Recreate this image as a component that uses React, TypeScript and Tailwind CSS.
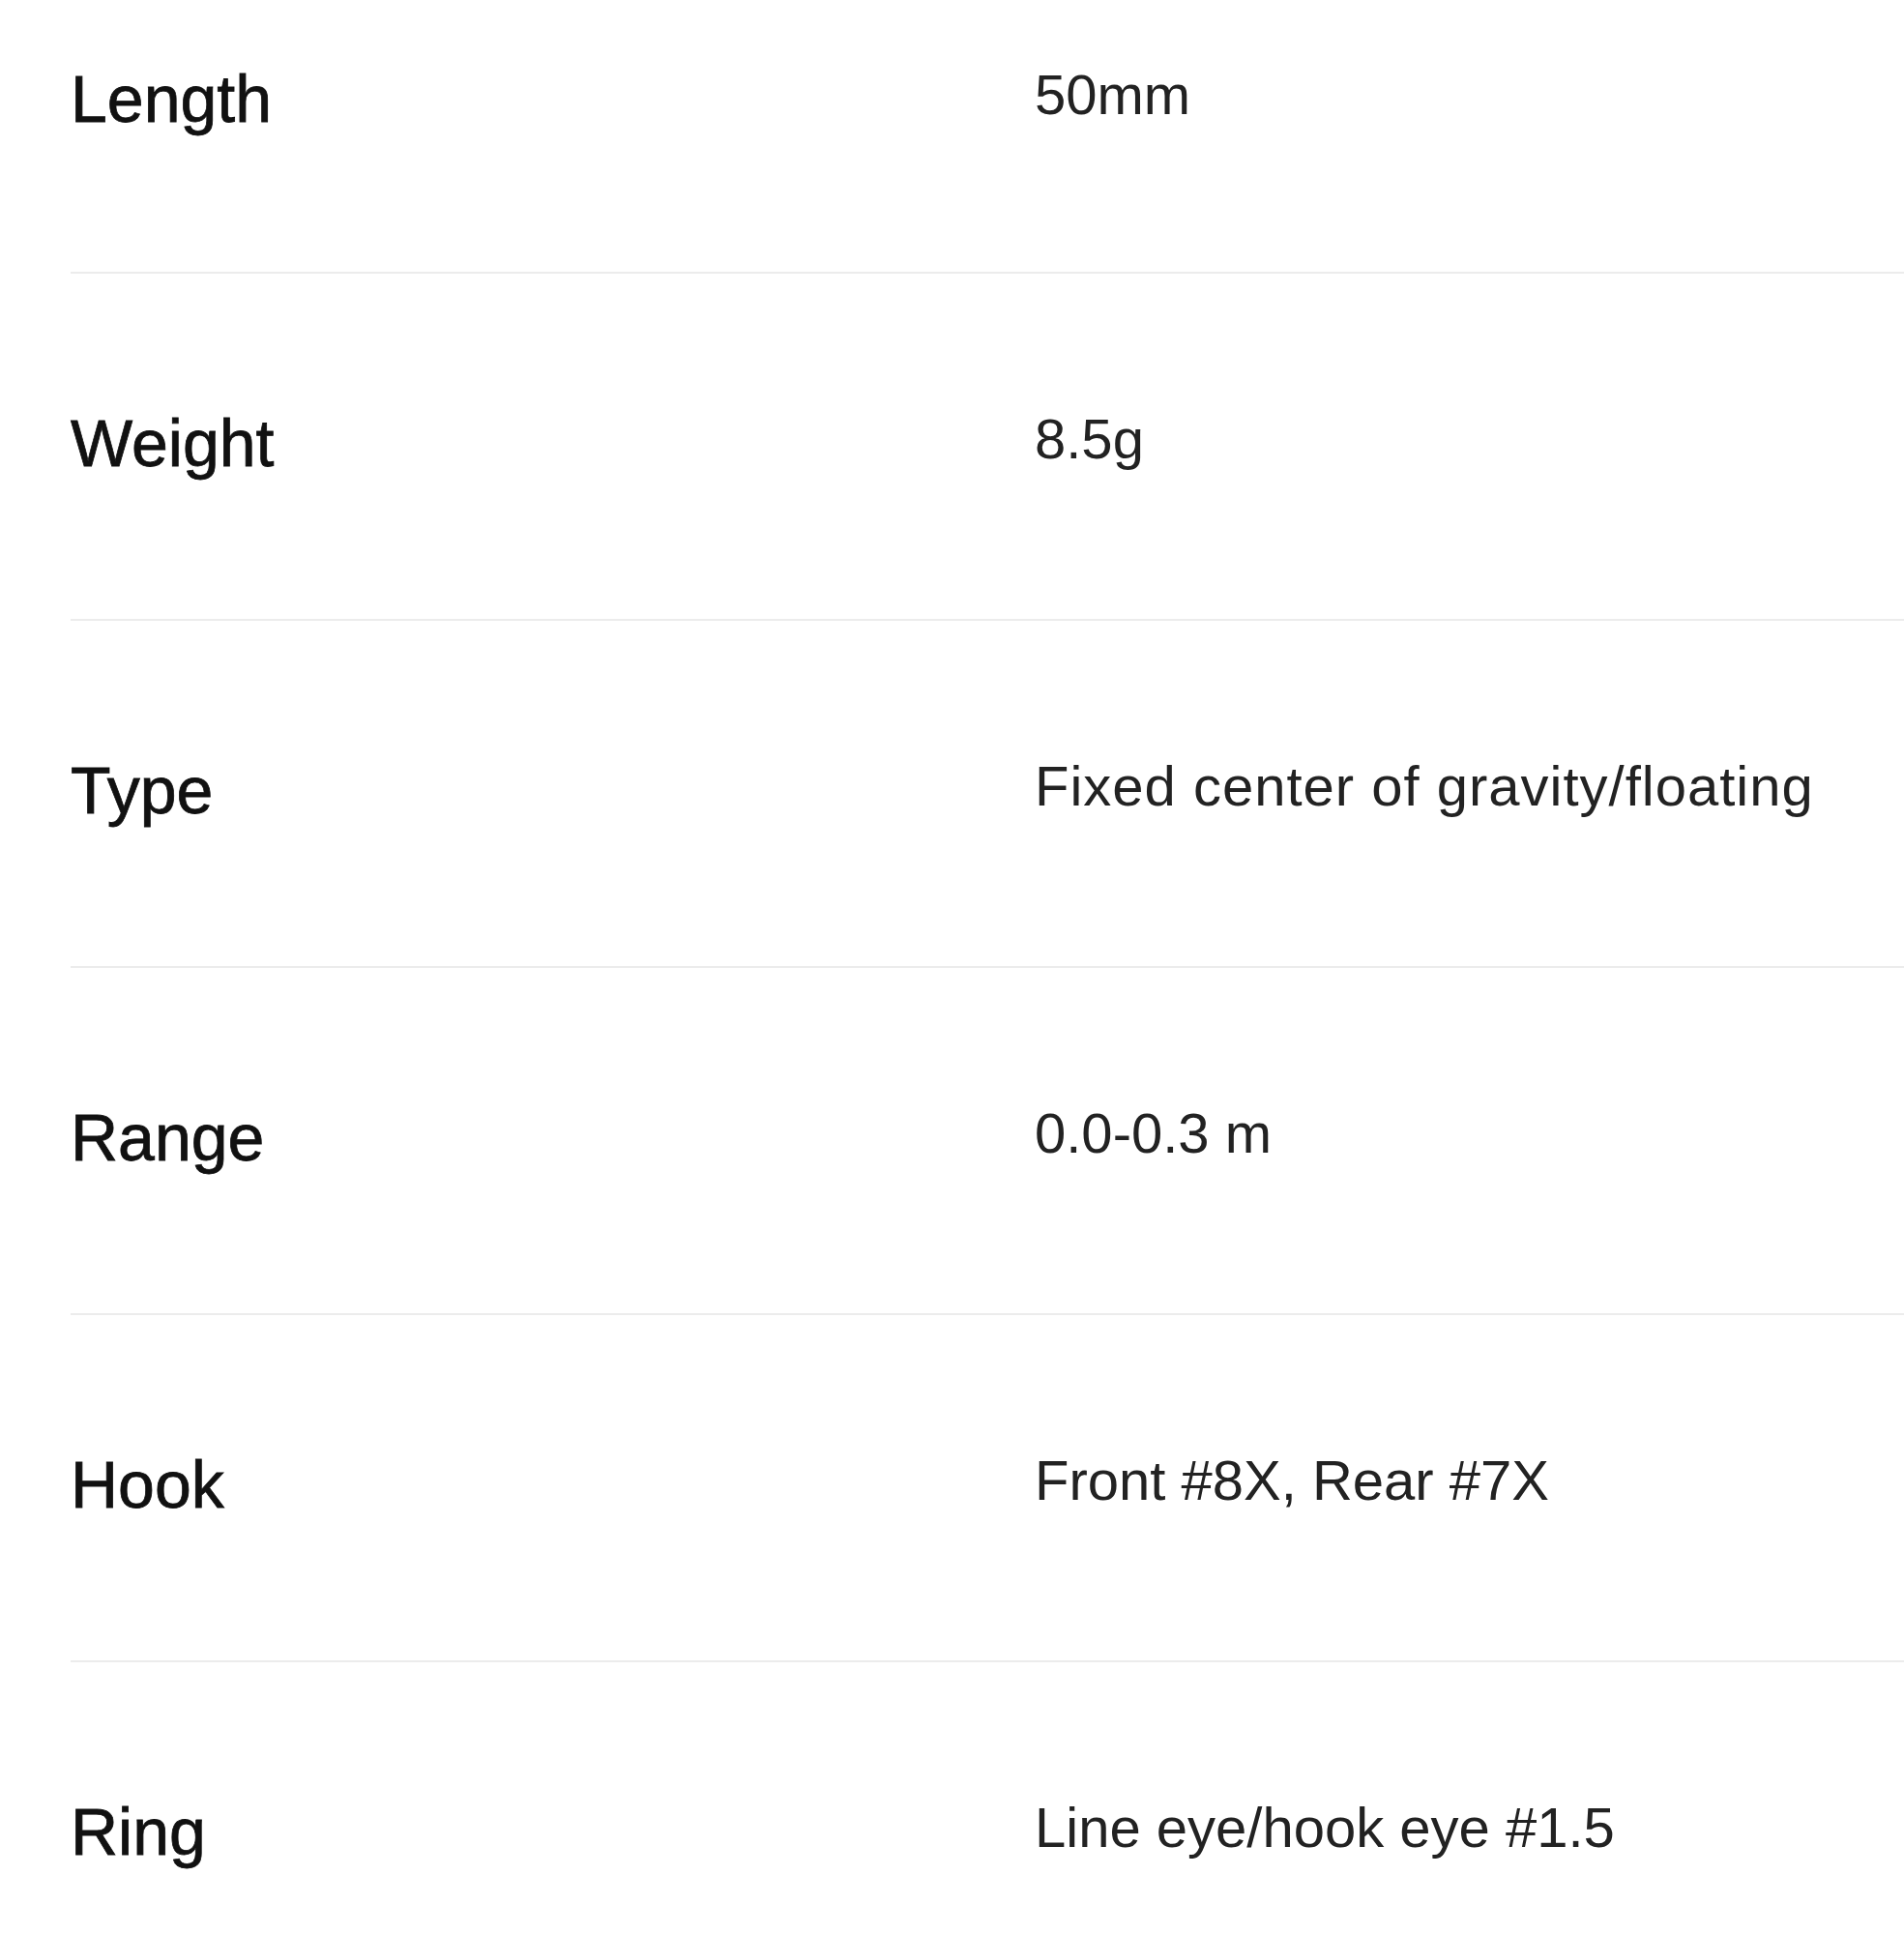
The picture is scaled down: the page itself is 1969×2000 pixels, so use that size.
import React from "react";

const rows: [string, string, string][] = [
  ["Length", "50mm", ""],
  ["Weight", "8.5g", ""],
  ["Type", "Fixed center of gravity/floating", "tracking-[1px]"],
  ["Range", "0.0-0.3 m", ""],
  ["Hook", "Front #8X, Rear #7X", ""],
  ["Ring", "Line eye/hook eye #1.5", ""],
];

export default function App() {
  return (
    <div className="min-h-[2000px] w-full bg-white pl-[73px] font-['Liberation_Sans',Arial,sans-serif]">
      {rows.map(([label, value, extra], i) => (
        <div
          key={label}
          className={`grid grid-cols-[997px_1fr] items-start ${
            i === 0 ? "pt-[68px] pb-[145px]" : "pt-[141px] pb-[148px]"
          } ${i < rows.length - 1 ? "border-b-2 border-[#ececec]" : ""}`}
        >
          <div className="text-[68px] leading-none text-[#111] [-webkit-text-stroke:0.8px_#111]">{label}</div>
          <div className={`mt-px text-[58px] leading-none text-[#222] ${extra}`}>{value}</div>
        </div>
      ))}
    </div>
  );
}
